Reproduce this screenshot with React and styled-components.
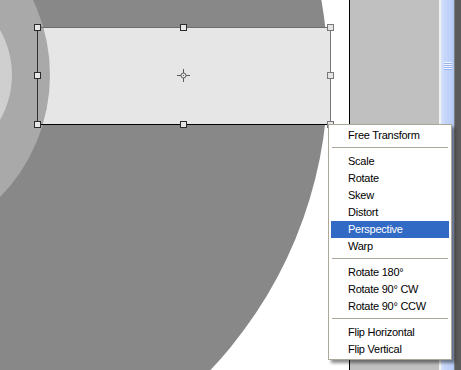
import React from 'react';
import styled, { createGlobalStyle } from 'styled-components';

const GlobalStyle = createGlobalStyle`
  html, body {
    margin: 0;
    padding: 0;
    overflow: hidden;
    background: #ffffff;
  }
`;

const Workspace = styled.div`
  position: relative;
  display: flex;
  width: 461px;
  height: 370px;
  overflow: hidden;
  font-family: "Liberation Sans", Arial, sans-serif;
`;

const Canvas = styled.div`
  position: relative;
  flex: 0 0 349px;
  height: 370px;
  background: #ffffff;
  border-right: 1px solid #000000;
`;

const Art = styled.svg`
  display: block;
`;

const TransformBox = styled.div`
  position: absolute;
  left: 37px;
  top: 27px;
  width: 294px;
  height: 98px;
  box-sizing: border-box;
  border-style: solid;
  border-width: 1px;
  border-color: #6c6c6c #757575 #000000 #2e2e2e;
`;

const Handle = styled.div`
  position: absolute;
  left: ${p => p.$x - 41}px;
  top: ${p => p.$y - 31}px;
  width: 7px;
  height: 7px;
  box-sizing: border-box;
  background: #e6e6e6;
  border: 1px solid ${p => (p.$dark ? '#2c2c2c' : '#787878')};
`;

const Crosshair = styled.svg`
  position: absolute;
  left: 176px;
  top: 68px;
`;

const Pasteboard = styled.div`
  flex: 0 0 89px;
  background: #c0c0c0;
`;

const ScrollGap = styled.div`
  flex: 0 0 2px;
  background: #f1f4ee;
`;

const ScrollThumb = styled.div`
  flex: 0 0 13px;
  display: flex;
  flex-direction: column;
  align-items: center;
  padding-top: 62px;
  box-sizing: border-box;
  background: linear-gradient(to right, #d6e2fd 0%, #c6d6fb 30%, #bccff9 80%, #aec4f3 100%);
`;

const GripLine = styled.div`
  width: 8px;
  height: 1px;
  background: #f2f6ff;
  border-bottom: 1px solid #94b1f2;
`;

const PanelEdge = styled.div`
  flex: 1;
  background: #5b5b5b;
  border-left: 1px solid #7e7e7e;
`;

const Menu = styled.ul`
  position: absolute;
  left: 328px;
  top: 124px;
  width: 124px;
  margin: 0;
  padding: 2px 0 1px;
  list-style: none;
  box-sizing: border-box;
  background: #ffffff;
  border: 1px solid #aca899;
  box-shadow: 3px 3px 3px rgba(0, 0, 0, 0.45);
`;

const MenuItem = styled.li`
  height: 17px;
  line-height: 17px;
  margin: 0 2px;
  padding-left: 17px;
  font-size: 11px;
  letter-spacing: -0.25px;
  white-space: nowrap;
  color: ${p => (p.$active ? '#ffffff' : '#000000')};
  background: ${p => (p.$active ? '#316ac5' : 'transparent')};
`;

const Separator = styled.li`
  height: 1px;
  margin: 3px 3px 5px;
  background: #aca899;
`;

const menuGroups = [
  ['Free Transform'],
  ['Scale', 'Rotate', 'Skew', 'Distort', 'Perspective', 'Warp'],
  ['Rotate 180°', 'Rotate 90° CW', 'Rotate 90° CCW'],
  ['Flip Horizontal', 'Flip Vertical'],
];

const handles = [
  { x: 37, y: 27, dark: true },
  { x: 183, y: 27, dark: true },
  { x: 330, y: 27 },
  { x: 37, y: 75, dark: true },
  { x: 330, y: 75 },
  { x: 37, y: 124, dark: true },
  { x: 183, y: 124, dark: true },
  { x: 330, y: 124 },
];

export default function App() {
  return (
    <>
      <GlobalStyle />
      <Workspace>
        <Canvas>
          <Art width="349" height="370" viewBox="0 0 349 370">
            <circle cx="-101" cy="75" r="429" fill="#888888" />
            <rect x="37" y="27" width="294" height="98" fill="#e6e6e6" />
            <circle cx="-124" cy="75" r="174" fill="#a9a9a9" />
            <circle cx="-78" cy="75" r="90" fill="#cfcfcf" />
          </Art>
          <TransformBox>
            {handles.map((h, i) => (
              <Handle key={i} $x={h.x} $y={h.y} $dark={h.dark} />
            ))}
          </TransformBox>
          <Crosshair width="15" height="15" viewBox="0 0 15 15">
            <circle cx="7.5" cy="7.5" r="2.5" fill="none" stroke="#5a5a5a" strokeWidth="1" />
            <rect x="7" y="7" width="1" height="1" fill="#5a5a5a" />
            <line x1="7.5" y1="1" x2="7.5" y2="5" stroke="#5a5a5a" strokeWidth="1" />
            <line x1="7.5" y1="10" x2="7.5" y2="14" stroke="#5a5a5a" strokeWidth="1" />
            <line x1="1" y1="7.5" x2="5" y2="7.5" stroke="#5a5a5a" strokeWidth="1" />
            <line x1="10" y1="7.5" x2="14" y2="7.5" stroke="#5a5a5a" strokeWidth="1" />
          </Crosshair>
        </Canvas>
        <Pasteboard />
        <ScrollGap />
        <ScrollThumb>
          <GripLine />
          <GripLine />
          <GripLine />
          <GripLine />
        </ScrollThumb>
        <PanelEdge />
        <Menu>
          {menuGroups.map((group, gi) => (
            <React.Fragment key={gi}>
              {gi > 0 && <Separator />}
              {group.map(label => (
                <MenuItem key={label} $active={label === 'Perspective'}>
                  {label}
                </MenuItem>
              ))}
            </React.Fragment>
          ))}
        </Menu>
      </Workspace>
    </>
  );
}
